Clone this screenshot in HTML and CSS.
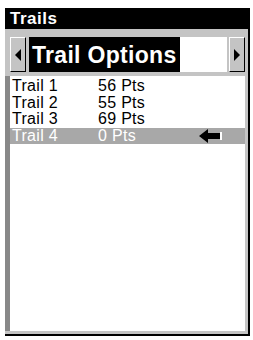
FILE: index.html
```html
<!DOCTYPE html>
<html lang="en">
<head>
    <meta charset="UTF-8">
    <title>Trails</title>
    <link rel="stylesheet" href="styles.css">
</head>
<body>
    <div class="window">
        <div class="title">Trails</div>
        <div class="selector">
            <div class="arrow-btn left"><span></span></div>
            <div class="selector-box">
                <div class="selector-label">Trail Options</div>
            </div>
            <div class="arrow-btn right"><span></span></div>
        </div>
        <div class="list">
            <div class="row"><span class="name">Trail 1</span><span class="pts">56 Pts</span></div>
            <div class="row"><span class="name">Trail 2</span><span class="pts">55 Pts</span></div>
            <div class="row"><span class="name">Trail 3</span><span class="pts">69 Pts</span></div>
            <div class="row selected">
                <span class="name">Trail 4</span><span class="pts">0 Pts</span>
                <svg class="pointer" width="24" height="14" viewBox="0 0 24 14">
                    <polygon points="0,7 9,0 9,4 22,4 22,10 9,10 9,14" fill="#000"/>
                    <rect x="21" y="3" width="2" height="8" fill="#fff"/>
                </svg>
            </div>
        </div>
    </div>
</body>
</html>
```

FILE: styles.css
```css
body {
    margin: 0;
    background-color: #fff;
    font-family: "Liberation Sans", Arial, sans-serif;
}

.window {
    margin: 8px 3px 2px 5px;
    height: 326px;
    display: flex;
    flex-direction: column;
    background-color: #c4c4c4;
    border-right: 2px solid #000;
    border-bottom: 2px solid #000;
}

.title {
    height: 21px;
    line-height: 22px;
    padding-left: 5px;
    background-color: #000;
    color: #fff;
    font-size: 17px;
    font-weight: bold;
    letter-spacing: 0.5px;
}

.selector {
    display: flex;
    align-items: stretch;
    height: 35px;
    margin: 8px 3px 4px 5px;
}

.arrow-btn {
    width: 14px;
    display: flex;
    align-items: center;
    justify-content: center;
    background-color: #c4c4c4;
    border: 1px solid #fff;
    border-right-color: #000;
    border-bottom-color: #000;
}

.arrow-btn span {
    width: 0;
    height: 0;
    border-top: 6px solid transparent;
    border-bottom: 6px solid transparent;
}

.arrow-btn.left span {
    border-right: 6px solid #000;
}

.arrow-btn.right span {
    border-left: 6px solid #000;
}

.selector-box {
    flex: 1;
    margin: 0 2px 0 3px;
    background-color: #fff;
}

.selector-label {
    display: inline-block;
    height: 35px;
    line-height: 36px;
    padding: 0 4px 0 3px;
    background-color: #000;
    color: #fff;
    font-size: 23px;
    font-weight: bold;
    letter-spacing: 0.3px;
}

.list {
    flex: 1;
    margin: 0 3px 3px 0;
    padding-top: 2px;
    background-color: #fff;
    border-left: 5px solid #888;
}

.row {
    display: flex;
    align-items: center;
    height: 16.6px;
    line-height: 16px;
    padding-left: 2px;
    font-size: 16px;
    color: #000;
    letter-spacing: 0.3px;
}

.row .name {
    width: 86px;
}

.row.selected {
    background-color: #a8a8a8;
    color: #fff;
}

.pointer {
    margin-left: auto;
    margin-right: 22px;
}
```
